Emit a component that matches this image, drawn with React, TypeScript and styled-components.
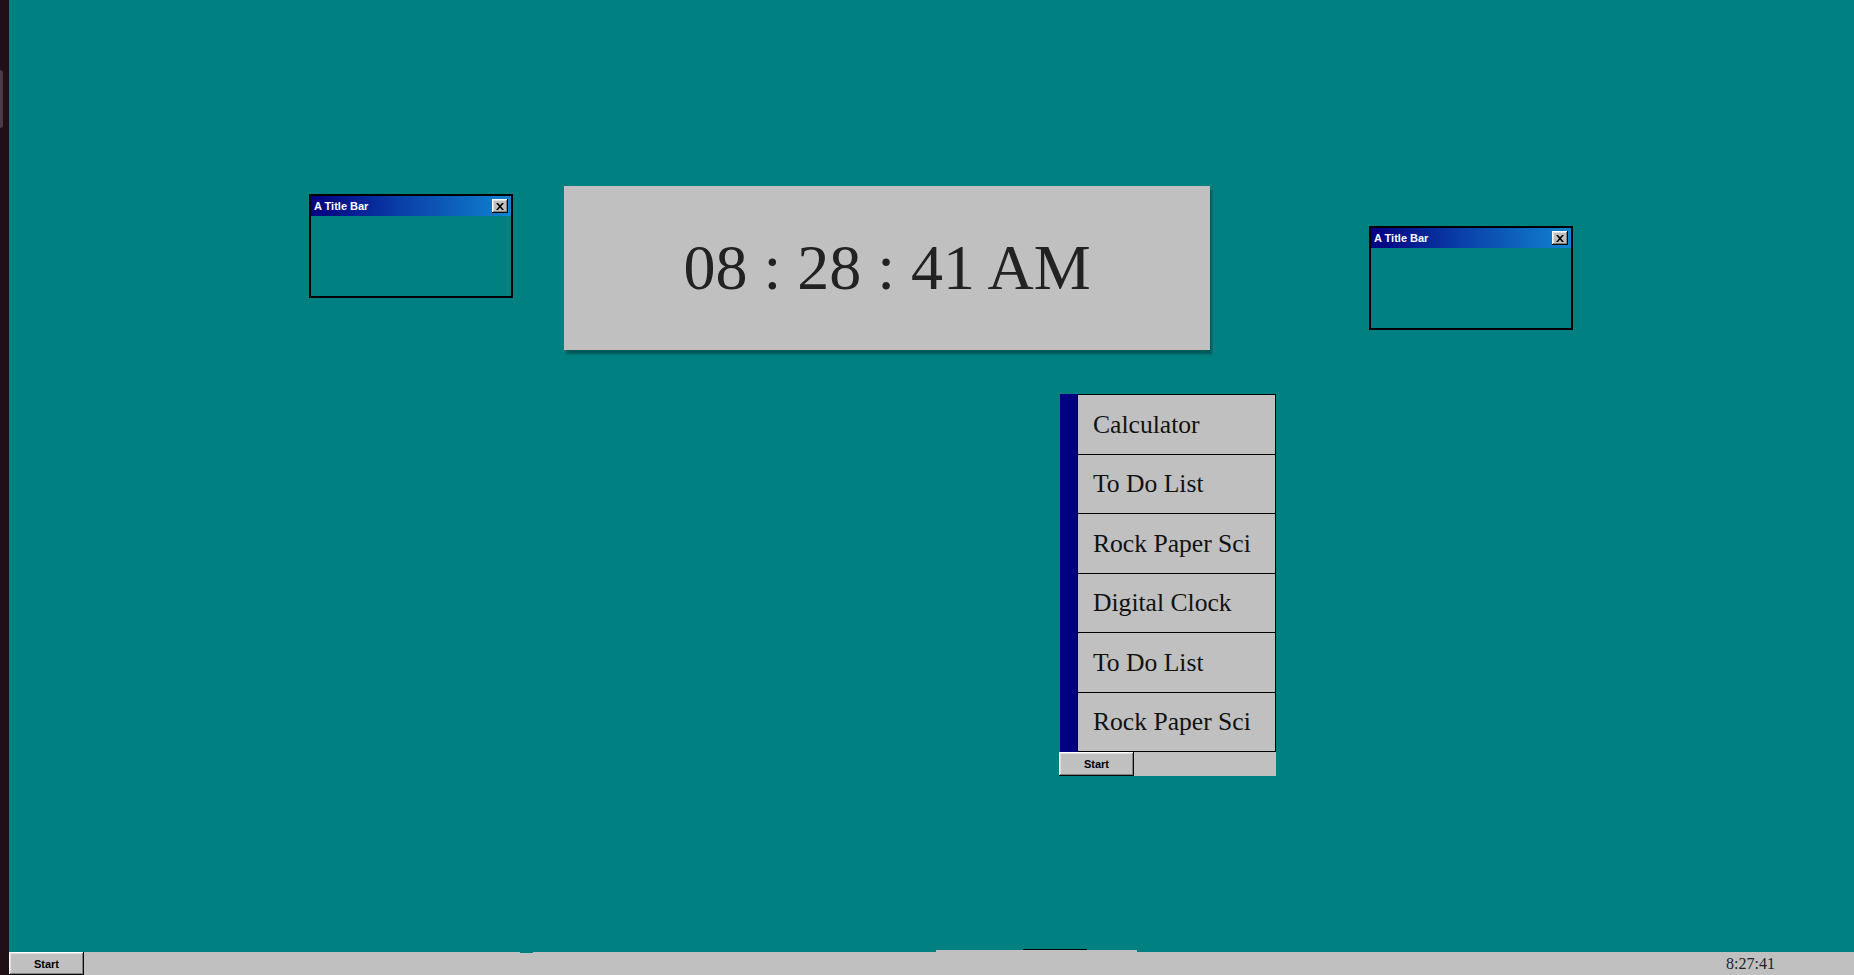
import styled, { createGlobalStyle } from 'styled-components';

const GlobalStyle = createGlobalStyle`
  html, body {
    margin: 0;
    padding: 0;
    height: 100%;
    overflow: hidden;
  }
  #root {
    height: 100%;
  }
`;

type WindowSpec = { id: string; left: number; top: number };

const windows: WindowSpec[] = [
  { id: 'w1', left: 300, top: 194 },
  { id: 'w2', left: 1360, top: 226 },
];

const menuItems = [
  'Calculator',
  'To Do List',
  'Rock Paper Sci',
  'Digital Clock',
  'To Do List',
  'Rock Paper Sci',
];

const CloseIcon = () => (
  <svg width="8" height="7" viewBox="0 0 8 7">
    <path d="M0 0h2l2 2.2L6 0h2L5 3.5 8 7H6L4 4.8 2 7H0l3-3.5z" fill="#000" />
  </svg>
);

const App = () => {
  return (
    <>
      <GlobalStyle />
      <Screen>
        <SideStrip>
          <StripHandle />
        </SideStrip>
        <Desktop>
          <Canvas>
            {windows.map((w) => (
              <Window key={w.id} $left={w.left} $top={w.top}>
                <TitleBar>
                  <TitleText>A Title Bar</TitleText>
                  <CloseButton>
                    <CloseIcon />
                  </CloseButton>
                </TitleBar>
              </Window>
            ))}

            <ClockPanel>
              <ClockText>08 : 28 : 41 AM</ClockText>
            </ClockPanel>

            <StartMenu>
              <MenuBody>
                <MenuStripe />
                <MenuList>
                  {menuItems.map((label, i) => (
                    <MenuItem key={i}>{label}</MenuItem>
                  ))}
                </MenuList>
              </MenuBody>
              <MenuFooter>
                <StartButton>Start</StartButton>
              </MenuFooter>
            </StartMenu>
          </Canvas>
          <Taskbar>
            <TaskNotch />
            <TaskTab>
              <TaskTabLine />
            </TaskTab>
            <StartButton>Start</StartButton>
            <TrayClock>8:27:41</TrayClock>
          </Taskbar>
        </Desktop>
      </Screen>
    </>
  );
};

const Screen = styled.div`
  display: flex;
  height: 100vh;
  width: 100vw;
`;

const SideStrip = styled.div`
  width: 9px;
  flex-shrink: 0;
  background: #1f1018;
  display: flex;
  flex-direction: column;
`;

const StripHandle = styled.div`
  margin-top: 70px;
  width: 3px;
  height: 58px;
  background: #4b3b42;
  border-radius: 0 3px 3px 0;
`;

const Desktop = styled.div`
  flex: 1;
  display: flex;
  flex-direction: column;
  background: #008080;
`;

const Canvas = styled.div`
  flex: 1;
  position: relative;
`;

const Window = styled.div<{ $left: number; $top: number }>`
  position: absolute;
  left: ${(p) => p.$left}px;
  top: ${(p) => p.$top}px;
  width: 204px;
  height: 104px;
  box-sizing: border-box;
  border: 2px solid #000;
  background: #008080;
`;

const TitleBar = styled.div`
  height: 20px;
  display: flex;
  align-items: center;
  justify-content: space-between;
  padding: 0 3px 0 3px;
  background: linear-gradient(90deg, #000080 0%, #0a3fa8 45%, #1084d0 100%);
`;

const TitleText = styled.span`
  font-family: 'Liberation Sans', Arial, sans-serif;
  font-weight: bold;
  font-size: 11px;
  color: #fff;
`;

const CloseButton = styled.div`
  width: 16px;
  height: 14px;
  box-sizing: border-box;
  background: #c0c0c0;
  display: flex;
  align-items: center;
  justify-content: center;
  box-shadow: inset -1px -1px #0a0a0a, inset 1px 1px #ffffff,
    inset -2px -2px #808080, inset 2px 2px #dfdfdf;
`;

const ClockPanel = styled.div`
  position: absolute;
  left: 555px;
  top: 186px;
  width: 646px;
  height: 164px;
  background: #c0c0c0;
  box-shadow: 2px 4px 2px rgba(0, 0, 0, 0.3);
  display: flex;
  align-items: center;
  justify-content: center;
`;

const ClockText = styled.span`
  font-family: 'Liberation Serif', 'Times New Roman', serif;
  font-size: 64px;
  color: #222;
  white-space: nowrap;
`;

const StartMenu = styled.div`
  position: absolute;
  left: 1050px;
  top: 394px;
  width: 217px;
  display: flex;
  flex-direction: column;
`;

const MenuBody = styled.div`
  display: flex;
  padding-left: 1px;
`;

const MenuStripe = styled.div`
  width: 17px;
  background: #000080;
`;

const MenuList = styled.div`
  flex: 1;
  display: flex;
  flex-direction: column;
  border-top: 1px solid #000;
`;

const MenuItem = styled.div`
  height: 59.5px;
  box-sizing: border-box;
  display: flex;
  align-items: center;
  padding: 1px 0 0 15px;
  background: #c0c0c0;
  border: 1px solid #000;
  border-top: none;
  font-family: 'Liberation Serif', 'Times New Roman', serif;
  font-size: 25.6px;
  color: #111;
  white-space: nowrap;
  overflow: hidden;
`;

const MenuFooter = styled.div`
  height: 24px;
  background: #c0c0c0;
  display: flex;
`;

const StartButton = styled.button`
  width: 75px;
  height: 100%;
  padding: 0;
  border: none;
  background: #c0c0c0;
  font-family: 'Liberation Sans', Arial, sans-serif;
  font-weight: bold;
  font-size: 11px;
  color: #000;
  box-shadow: inset -1px -1px #0a0a0a, inset 1px 1px #ffffff,
    inset -2px -2px #808080, inset 2px 2px #dfdfdf;
`;

const Taskbar = styled.div`
  height: 23px;
  flex-shrink: 0;
  position: relative;
  background: #c0c0c0;
  display: flex;
  align-items: center;
  justify-content: space-between;
`;

const TaskNotch = styled.div`
  position: absolute;
  left: 511px;
  top: 0;
  width: 13px;
  height: 1px;
  background: #008080;
`;

const TaskTab = styled.div`
  position: absolute;
  left: 927px;
  top: -2px;
  width: 201px;
  height: 2px;
  background: #c0c0c0;
`;

const TaskTabLine = styled.div`
  position: absolute;
  left: 87px;
  top: -1px;
  width: 64px;
  height: 1px;
  background: #000;
`;

const TrayClock = styled.span`
  font-family: 'Liberation Serif', 'Times New Roman', serif;
  font-size: 16px;
  color: #222;
  margin-right: 79px;
`;

export default App;
